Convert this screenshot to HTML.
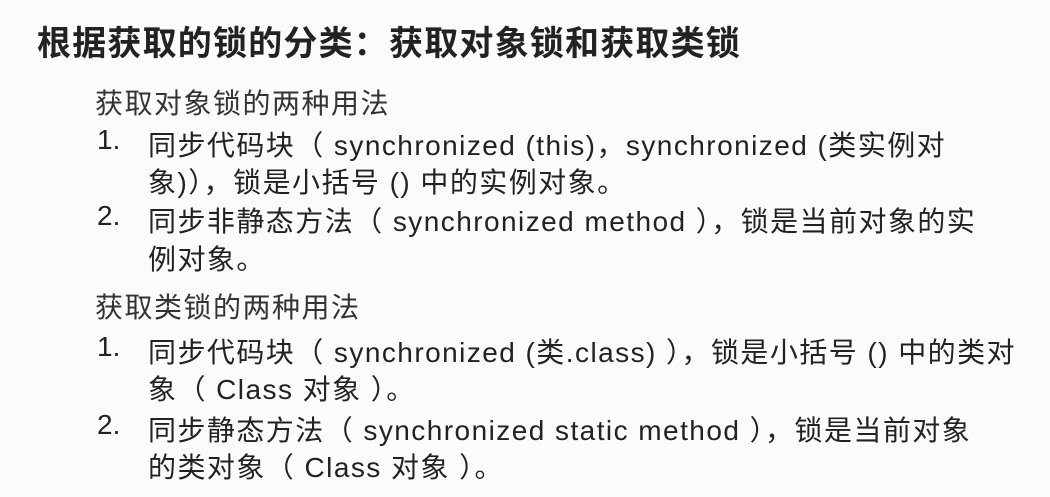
<!DOCTYPE html>
<html><head><meta charset="utf-8"><style>
body{margin:0;width:1050px;height:497px;background:#fbfbfb;overflow:hidden;font-family:"Liberation Sans","Noto Sans CJK SC",sans-serif;color:#222;}
div{position:absolute;white-space:nowrap;}
.t{left:37px;top:16px;font-size:34px;font-weight:bold;letter-spacing:1.2px;}
.h{left:95px;font-size:28px;letter-spacing:1.5px;color:#333;}
.n{left:97px;font-size:28px;}
.l{left:148px;font-size:28px;letter-spacing:1.45px;}
</style></head><body>
<div class="t">根据获取的锁的分类：获取对象锁和获取类锁</div>
<div class="h" style="top:82px">获取对象锁的两种用法</div>
<div class="n" style="top:124px">1.</div>
<div class="l" style="top:124px">同步代码块（ synchronized (this)，synchronized (类实例对</div>
<div class="l" style="top:161px">象)），锁是小括号 () 中的实例对象。</div>
<div class="n" style="top:200px">2.</div>
<div class="l" style="top:200px">同步非静态方法（ synchronized method ），锁是当前对象的实</div>
<div class="l" style="top:238px">例对象。</div>
<div class="h" style="top:286px">获取类锁的两种用法</div>
<div class="n" style="top:331px">1.</div>
<div class="l" style="top:331px">同步代码块（ synchronized (类.class) ），锁是小括号 () 中的类对</div>
<div class="l" style="top:368px">象（ Class 对象 ）。</div>
<div class="n" style="top:409px">2.</div>
<div class="l" style="top:409px">同步静态方法（ synchronized static method ），锁是当前对象</div>
<div class="l" style="top:446px">的类对象（ Class 对象 ）。</div>
</body></html>
